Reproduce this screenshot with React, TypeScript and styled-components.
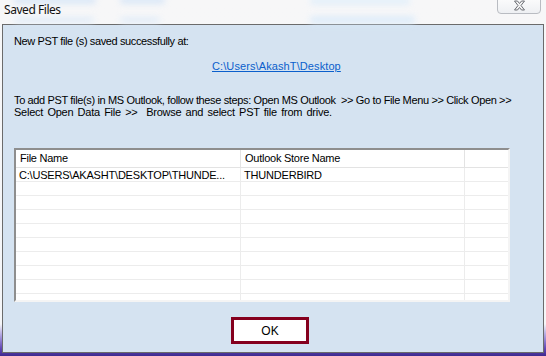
import React from "react";
import styled, { createGlobalStyle } from "styled-components";

const Global = createGlobalStyle`
  html, body { margin: 0; padding: 0; }
  body { width: 546px; height: 356px; overflow: hidden; background: #f7f7f7; }
  #root { width: 546px; height: 356px; }
`;

const Window = styled.div`
  position: relative;
  width: 546px;
  height: 356px;
  overflow: hidden;
  display: flex;
  flex-direction: column;
  background: linear-gradient(
    to bottom,
    #f7f7f8 0%,
    #f5f6f8 91%,
    #a89ade 94.5%,
    #5f45b4 98%,
    #3e2a8e 100%
  );
  font-family: "Liberation Sans", Arial, sans-serif;
`;

const Blob = styled.span<{ $x: number; $y: number; $w: number; $h: number; $c: string }>`
  position: absolute;
  left: ${(p) => p.$x}px;
  top: ${(p) => p.$y}px;
  width: ${(p) => p.$w}px;
  height: ${(p) => p.$h}px;
  background: ${(p) => p.$c};
  filter: blur(3px);
  border-radius: 3px;
  opacity: 0.7;
`;

const TitleBar = styled.div`
  position: relative;
  height: 24px;
  flex: none;
  display: flex;
  align-items: flex-start;
  padding-left: 4px;
`;

const Title = styled.span`
  font-family: "Noto Sans", "Open Sans", sans-serif;
  font-size: 12px;
  line-height: 16px;
  margin-top: 2px;
  letter-spacing: -0.45px;
  color: #111;
  position: relative;
`;

const CloseButton = styled.div`
  position: absolute;
  left: 497px;
  top: -4px;
  width: 44px;
  height: 18px;
  box-sizing: border-box;
  border: 1px solid #b9bcc2;
  border-radius: 4px;
  background: linear-gradient(#fdfdfd, #eef0f3);
  display: flex;
  align-items: flex-end;
  justify-content: center;
  padding-bottom: 2px;
`;

const Panel = styled.div`
  margin: 0 2px 3px 2px;
  flex: 1;
  box-sizing: border-box;
  border: 1px solid #6b6b6b;
  background: #d5e3f1;
  padding: 10px 0 0 11px;
  display: flex;
  flex-direction: column;
  font-size: 11px;
  color: #000;
`;

const Message = styled.div`
  line-height: 13px;
  height: 13px;
  letter-spacing: -0.38px;
`;

const LinkRow = styled.div`
  margin-top: 12px;
  height: 13px;
  line-height: 13px;
  padding-left: 198px;
`;

const PathLink = styled.a`
  color: #0b5fcc;
  text-decoration: underline;
  letter-spacing: 0.1px;
`;

const Instructions = styled.div`
  margin-top: 21px;
  width: 520px;
  line-height: 12px;
  letter-spacing: -0.36px;
  white-space: nowrap;
`;

const Line2 = styled.span`
  letter-spacing: -0.25px;
  word-spacing: 1.5px;
`;

const Table = styled.div`
  margin-top: 30px;
  width: 496px;
  height: 154px;
  box-sizing: border-box;
  border-top: 2px solid #8e8e8e;
  border-left: 2px solid #8e8e8e;
  border-right: 2px solid #f4f4f4;
  border-bottom: 2px solid #f4f4f4;
  background: #fff;
  overflow: hidden;
  display: grid;
  grid-template-columns: 225px 224px 1fr;
  grid-auto-rows: 14px;
  grid-template-rows: 18px;
`;

const HeadCell = styled.div<{ $last?: boolean }>`
  border-right: ${(p) => (p.$last ? "none" : "1px solid #e3e3e3")};
  border-bottom: 1px solid #e3e3e3;
  padding-left: 4px;
  line-height: 16px;
  white-space: nowrap;
  overflow: hidden;
  letter-spacing: -0.25px;
`;

const Cell = styled.div<{ $last?: boolean }>`
  border-right: ${(p) => (p.$last ? "none" : "1px solid #ececec")};
  border-bottom: 1px solid #ececec;
  padding-left: ${(p) => (p.$last ? 4 : 3)}px;
  line-height: 14px;
  white-space: nowrap;
  overflow: hidden;
  box-sizing: border-box;
  letter-spacing: -0.2px;
`;

const ButtonRow = styled.div`
  margin-top: 15px;
  padding-left: 217px;
  display: flex;
`;

const OkButton = styled.button`
  width: 78px;
  height: 27px;
  box-sizing: border-box;
  border: 3px solid #85001e;
  background: #fff;
  font-family: "Liberation Sans", Arial, sans-serif;
  font-size: 12px;
  color: #000;
  padding: 0;
  cursor: pointer;
`;

const rows = [
  ["C:\\USERS\\AKASHT\\DESKTOP\\THUNDE...", "THUNDERBIRD", ""],
  ...Array.from({ length: 9 }, () => ["", "", ""]),
];

export default function App() {
  return (
    <Window>
      <Global />
      <Blob $x={14} $y={-4} $w={82} $h={8} $c="#cfe2f7" />
      <Blob $x={120} $y={-4} $w={45} $h={8} $c="#cfe2f7" />
      <Blob $x={310} $y={-3} $w={100} $h={8} $c="#dcedfb" />
      <Blob $x={14} $y={17} $w={80} $h={6} $c="#d9e8f8" />
      <Blob $x={120} $y={17} $w={40} $h={6} $c="#d9e8f8" />
      <Blob $x={310} $y={16} $w={105} $h={8} $c="#d4e8fa" />
      <TitleBar>
        <Title>Saved Files</Title>
        <CloseButton>
          <svg width="13" height="11" viewBox="0 0 13 11">
            <path
              d="M1.5 1 L4.5 1 L6.5 3.5 L8.5 1 L11.5 1 L8 5.5 L11.5 10 L8.5 10 L6.5 7.5 L4.5 10 L1.5 10 L5 5.5 Z"
              fill="#f4f4f4"
              stroke="#6c6f75"
              strokeWidth="1"
              strokeLinejoin="round"
            />
          </svg>
        </CloseButton>
      </TitleBar>
      <Panel>
        <Message>New PST file (s) saved successfully at:</Message>
        <LinkRow>
          <PathLink href="#">C:\Users\AkashT\Desktop</PathLink>
        </LinkRow>
        <Instructions>
          To add PST file(s) in MS Outlook, follow these steps: Open MS Outlook &nbsp;&gt;&gt; Go to File Menu &gt;&gt; Click Open &gt;&gt;
          <br />
          <Line2>Select Open Data File &gt;&gt; &nbsp;Browse and select PST file from drive.</Line2>
        </Instructions>
        <Table>
          <HeadCell>File Name</HeadCell>
          <HeadCell>Outlook Store Name</HeadCell>
          <HeadCell $last />
          {rows.map((r, i) =>
            r.map((c, j) => (
              <Cell key={`${i}-${j}`} $last={j === 2}>
                {c}
              </Cell>
            ))
          )}
        </Table>
        <ButtonRow>
          <OkButton>OK</OkButton>
        </ButtonRow>
      </Panel>
    </Window>
  );
}
